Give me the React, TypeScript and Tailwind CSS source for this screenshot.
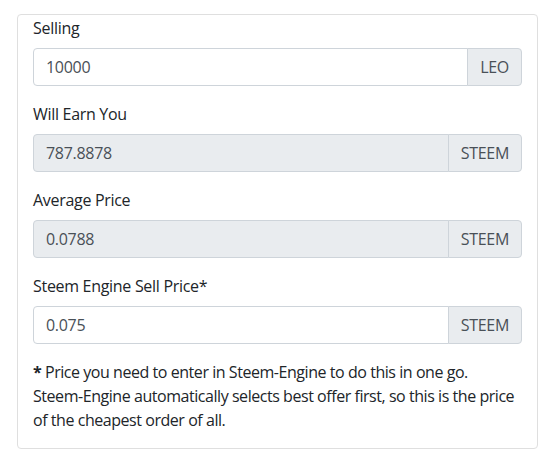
import React from "react";

type Field = {
  label: string;
  value: string;
  unit: string;
  readOnly?: boolean;
};

const fields: Field[] = [
  { label: "Selling", value: "10000", unit: "LEO" },
  { label: "Will Earn You", value: "787.8878", unit: "STEEM", readOnly: true },
  { label: "Average Price", value: "0.0788", unit: "STEEM", readOnly: true },
  { label: "Steem Engine Sell Price*", value: "0.075", unit: "STEEM" },
];

const InputGroup: React.FC<Field> = ({ label, value, unit, readOnly }) => (
  <div className="mb-4">
    <label className="block mb-2 leading-6">{label}</label>
    <div className="flex h-[38px]">
      <input
        readOnly
        defaultValue={value}
        className={`flex-1 min-w-0 h-full px-3 border border-[#ced4da] rounded-l-[4px] text-[#495057] tracking-[-0.3px] outline-none ${readOnly ? "bg-[#e9ecef]" : "bg-white"}`}
      />
      <span className="flex items-center h-full px-3 -ml-px bg-[#e9ecef] border border-[#ced4da] rounded-r-[4px] text-[#495057]">
        {unit}
      </span>
    </div>
  </div>
);

export default function App() {
  return (
    <div className="bg-white min-h-screen pt-[14px] pl-[17px] pr-[14px] font-['Open_Sans','Lato',sans-serif] text-base tracking-[-0.3px] text-[#212529]">
      <div className="border border-[#dfdfdf] rounded-[4px] px-[15px] pt-px">
        {fields.map((f) => (
          <InputGroup key={f.label} {...f} />
        ))}
        <p className="mb-4 leading-6 tracking-[-0.45px]">
          <b>*</b> Price you need to enter in Steem-Engine to do this in one go.
          <br />
          Steem-Engine automatically selects best offer first, so this is the
          price of the cheapest order of all.
        </p>
      </div>
    </div>
  );
}
